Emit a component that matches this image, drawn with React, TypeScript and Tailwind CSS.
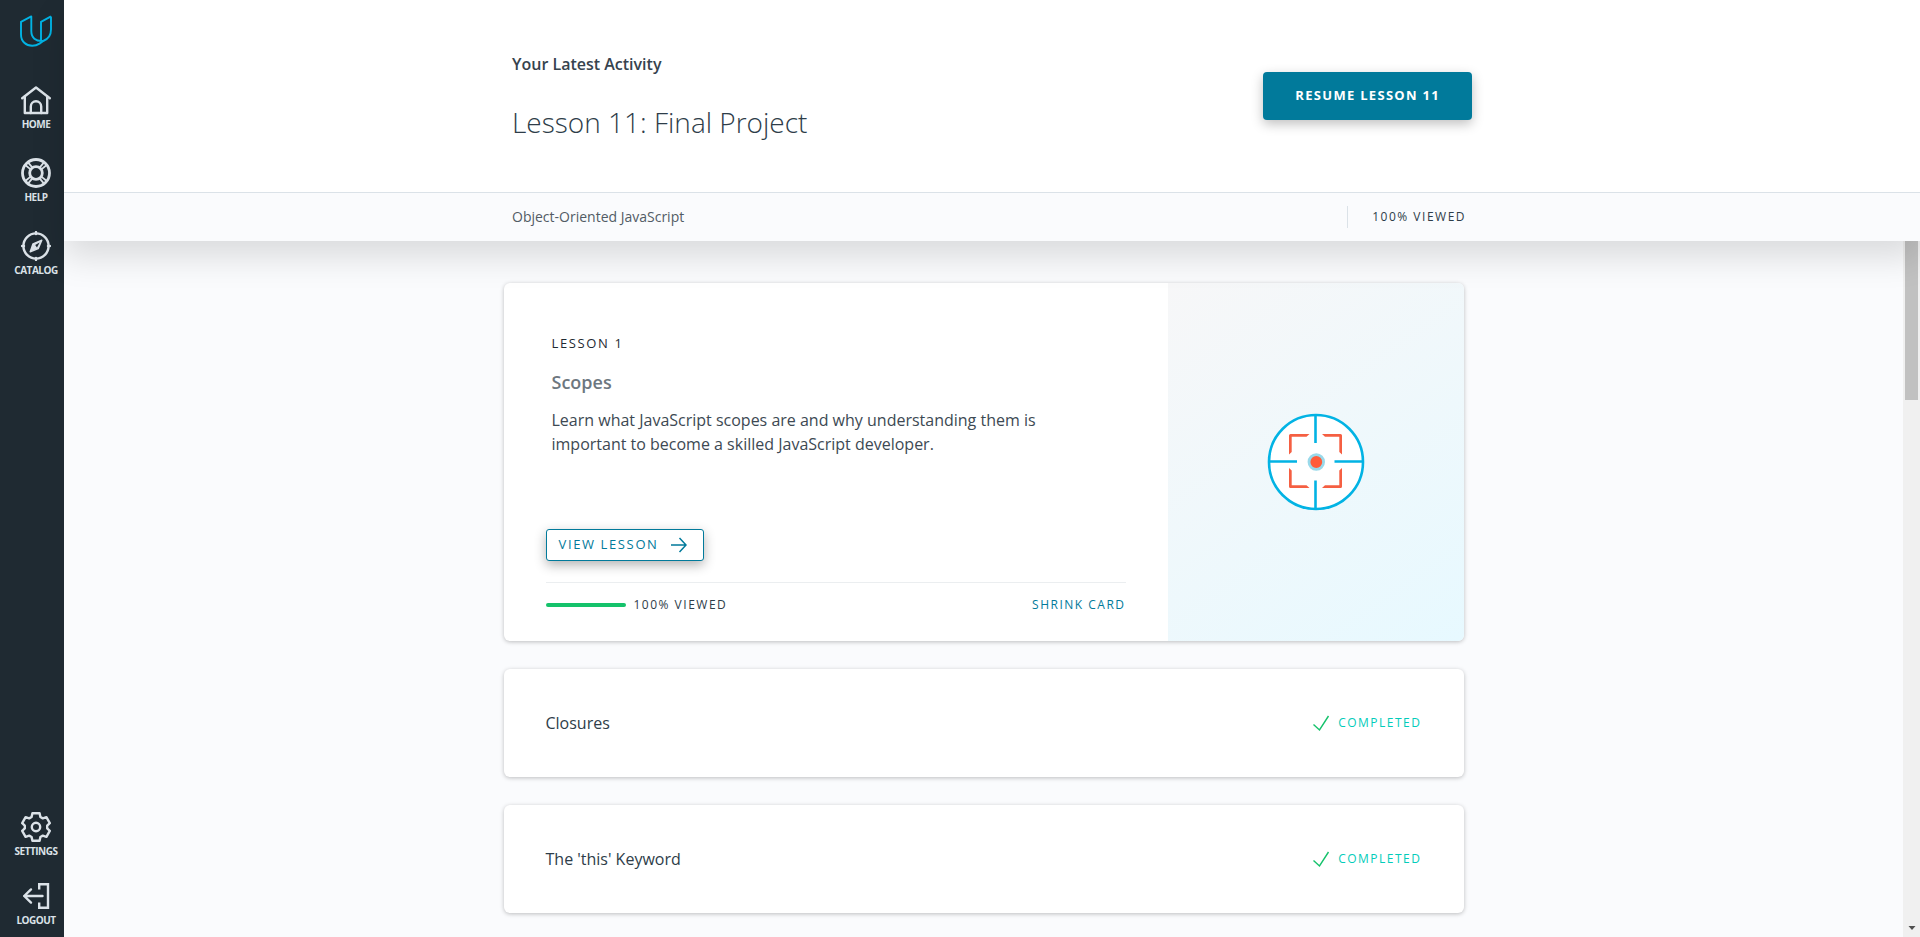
import type { ReactNode } from "react";

const stroke = {
  fill: "none",
  stroke: "currentColor",
  strokeWidth: 2.4,
  strokeLinejoin: "round" as const,
  strokeLinecap: "round" as const,
};

function Logo() {
  return (
    <svg viewBox="0 0 32 32" className="size-8" fill="none" stroke="#02b3e4" strokeWidth="1.9" strokeLinejoin="round">
      <path d="M11.3 1.4 L1 6.8 V19.5 C1 26.5 6 30.8 12.3 30.8 C15 30.8 17.4 30 19.5 28.6 L23.2 26 C15.5 26.6 11.3 22.5 11.3 16 Z" />
      <path d="M31 1.4 L21 6.8 V25.8 M31 1.4 V14.5 C31 20 28.5 24 23.2 26" />
    </svg>
  );
}

function HomeIcon() {
  return (
    <svg viewBox="0 0 30 30" className="size-[30px]" {...stroke}>
      <path d="M1.2 13.2 L15 2.5 L28.8 13.2" />
      <path d="M3.8 11.5 V28 H26.2 V11.5" />
      <path d="M9.8 28 V21.5 A5.2 5.2 0 0 1 20.2 21.5 V28" />
    </svg>
  );
}

function HelpIcon() {
  return (
    <svg viewBox="0 0 30 30" className="size-[30px]" {...stroke} strokeWidth={2.8}>
      <circle cx="15" cy="15" r="13.5" />
      <circle cx="15" cy="15" r="6.3" />
      <path d="M4.6 7.2 L9.6 11.4 M7.2 4.6 L11.4 9.6 M22.8 4.6 L18.6 9.6 M25.4 7.2 L20.4 11.4 M4.6 22.8 L9.6 18.6 M7.2 25.4 L11.4 20.4 M25.4 22.8 L20.4 18.6 M22.8 25.4 L18.6 20.4" strokeWidth={1.8} />
    </svg>
  );
}

function CatalogIcon() {
  return (
    <svg viewBox="0 0 30 30" className="size-[30px]" {...stroke}>
      <circle cx="15" cy="15" r="12.6" />
      <path d="M15 1 V3 M15 27 V29 M1 15 H3 M27 15 H29" />
      <path d="M20.8 9.2 L17.2 17.6 L9.2 20.8 L12 12.8 Z" strokeWidth={1.4} fill="currentColor" />
      <path d="M18.6 11.4 L16 16.4 L14.2 14 Z" fill="#1f2a32" stroke="none" />
    </svg>
  );
}

function SettingsIcon() {
  return (
    <svg viewBox="0 0 30 30" className="size-[30px]" {...stroke}>
      <path d="M11.4 1.3 H18.6 L19.4 5 L21.8 6.4 L25.4 5.2 L28.8 11.2 L26.2 13.6 V16.4 L28.8 18.8 L25.4 24.8 L21.8 23.6 L19.4 25 L18.6 28.7 H11.4 L10.6 25 L8.2 23.6 L4.6 24.8 L1.2 18.8 L3.8 16.4 V13.6 L1.2 11.2 L4.6 5.2 L8.2 6.4 L10.6 5 Z" />
      <circle cx="15" cy="15" r="4.2" />
    </svg>
  );
}

function LogoutIcon() {
  return (
    <svg viewBox="0 0 30 30" className="size-[30px]" {...stroke}>
      <path d="M18.2 8.5 V3.2 H27 V26.8 H18.2 V21.5" strokeLinejoin="miter" strokeLinecap="butt" />
      <path d="M21.5 15 H3.2 M10 8.4 L3.2 15 L10 21.6" />
    </svg>
  );
}

function NavItem({ icon, label }: { icon: ReactNode; label: string }) {
  return (
    <a href="#" className="flex flex-col items-center gap-px text-[#dbe2e8]">
      {icon}
      <span className="text-[10px] leading-4 font-bold tracking-tighter">{label}</span>
    </a>
  );
}

function TargetIcon() {
  return (
    <svg viewBox="0 0 98 98" className="size-[98px]" fill="none">
      <circle cx="49" cy="49" r="47" fill="#fff" stroke="#02b3e4" strokeWidth="2.6" />
      <path d="M48.5 2 V30 M48.5 67.5 V96 M2 48.5 H30 M67.5 48.5 H96" stroke="#02b3e4" strokeWidth="2.6" />
      <g fill="#f55f42">
        <path d="M22 41.5 V22.5 Q22 21 23.5 21 H42.5 L39.5 23.7 H24.7 V39 Z" />
        <path d="M55 21 H73.5 Q75 21 75 22.5 V41.5 L72.3 39 V23.7 H58 Z" />
        <path d="M22 55 V73.5 Q22 75 23.5 75 H42.5 L39.5 72.3 H24.7 V57.5 Z" />
        <path d="M55 75 H73.5 Q75 75 75 73.5 V55 L72.3 57.5 V72.3 H58 Z" />
      </g>
      <circle cx="49.3" cy="49" r="7.3" fill="#ff5c3a" stroke="#99d9ea" strokeWidth="2.8" />
    </svg>
  );
}

function LessonRow({ title }: { title: string }) {
  return (
    <article className="flex h-[108px] items-center justify-between rounded-md bg-white px-[42px] shadow-[0_1px_4px_rgba(0,0,0,0.25)]">
      <h2 className="text-base leading-6 font-medium text-[#2e3d49]">{title}</h2>
      <div className="flex items-center gap-2 text-[#02ccba]">
        <svg viewBox="0 0 18 18" className="size-[18px]" fill="none" stroke="#15c26b" strokeWidth="1.4">
          <path d="M1.5 10.5 L7.5 16 L16.5 2" />
        </svg>
        <span className="text-xs leading-4 font-medium tracking-[0.125em]">COMPLETED</span>
      </div>
    </article>
  );
}

export default function App() {
  return (
    <div className="flex h-screen overflow-hidden bg-[#fafbfd] font-['Open_Sans',sans-serif] text-[#2e3d49]">
      <nav className="flex w-16 shrink-0 flex-col justify-between bg-[#1f2a32] pt-[15px] pb-[9px] pl-2">
        <div className="flex flex-col items-center gap-[26px]">
          <a href="#" aria-label="Classroom" className="mb-3">
            <Logo />
          </a>
          <NavItem icon={<HomeIcon />} label="HOME" />
          <NavItem icon={<HelpIcon />} label="HELP" />
          <NavItem icon={<CatalogIcon />} label="CATALOG" />
        </div>
        <div className="flex flex-col items-center gap-[22px]">
          <NavItem icon={<SettingsIcon />} label="SETTINGS" />
          <NavItem icon={<LogoutIcon />} label="LOGOUT" />
        </div>
      </nav>

      <div className="flex min-w-0 flex-1 flex-col">
        <header className="z-10 shrink-0 shadow-[0_16px_32px_rgba(0,0,0,0.13)]">
          <div className="bg-white">
            <div className="mx-auto flex h-48 max-w-[960px] items-center justify-between">
              <div className="flex flex-col gap-[26px] pt-0.5">
                <p className="text-base leading-6 font-semibold text-[#36434e]">Your Latest Activity</p>
                <h1 className="text-[28px] leading-10 font-light">Lesson 11: Final Project</h1>
              </div>
              <button className="h-12 rounded bg-[#017a9b] px-8 text-[13px] font-bold tracking-widest text-white shadow-[0_4px_12px_rgba(0,0,0,0.25)]">
                RESUME LESSON 11
              </button>
            </div>
          </div>
          <div className="border-t border-[#dbe2e8] bg-[#fafbfd]">
            <div className="mx-auto flex h-12 max-w-[960px] items-center justify-between">
              <p className="text-sm text-[#525c65]">Object-Oriented JavaScript</p>
              <p className="mr-1.5 border-l border-[#dbe2e8] pl-6 text-xs leading-[22px] tracking-[0.125em]">100% VIEWED</p>
            </div>
          </div>
        </header>

        <div className="flex min-h-0 flex-1">
          <main className="min-w-0 flex-1 overflow-hidden pt-[42px]">
            <div className="mx-auto flex max-w-[960px] flex-col gap-7">
              <article className="flex overflow-hidden rounded-md bg-white shadow-[0_1px_4px_rgba(0,0,0,0.25)]">
                <div className="flex flex-1 flex-col px-[42px] pt-12 pb-[26px]">
                  <div className="px-1.5">
                    <p className="text-[13px] leading-6 font-medium tracking-[0.125em] text-[#1f2a32]">LESSON 1</p>
                    <h2 className="mt-[13px] text-lg leading-7 font-semibold text-[#6d7780]">Scopes</h2>
                    <p className="mt-3 max-w-[500px] text-base leading-6 text-[#3d4953]">
                      Learn what JavaScript scopes are and why understanding them is important to become a skilled JavaScript developer.
                    </p>
                  </div>
                  <button className="mt-[73px] flex h-8 items-center gap-3 self-start rounded-[3px] border border-[#017a9b] bg-white pr-4 pl-3 text-[13px] font-medium tracking-[0.125em] text-[#017a9b] shadow-[0_4px_12px_rgba(0,0,0,0.3)]">
                    VIEW LESSON
                    <svg viewBox="0 0 16 16" className="size-4" fill="none" stroke="currentColor" strokeWidth="1.5">
                      <path d="M0 8 H15 M8.5 1 L15 8 L8.5 15" />
                    </svg>
                  </button>
                  <div className="mt-[21px] flex items-center border-t border-[#ebeef0] pt-3 text-xs leading-5 tracking-[0.125em]">
                    <div className="mr-2 h-1 w-20 rounded-sm bg-[#15c26b]" />
                    <span>100% VIEWED</span>
                    <button className="ml-auto tracking-[0.125em] text-[#017a9b]">SHRINK CARD</button>
                  </div>
                </div>
                <div className="flex w-[296px] shrink-0 items-center justify-center bg-linear-145 from-[#f7f7f8] to-[#e7f9ff]">
                  <TargetIcon />
                </div>
              </article>
              <LessonRow title="Closures" />
              <LessonRow title="The 'this' Keyword" />
            </div>
          </main>
          <div className="flex w-[17px] shrink-0 flex-col items-center justify-between bg-[#f0f0f0] pb-[7px]">
            <div className="h-[159px] w-[13px] bg-[#c1c1c1]" />
            <svg viewBox="0 0 8 4" className="h-1 w-2" fill="#505050">
              <path d="M0.5 0 H7.5 L4 4 Z" />
            </svg>
          </div>
        </div>
      </div>
    </div>
  );
}
